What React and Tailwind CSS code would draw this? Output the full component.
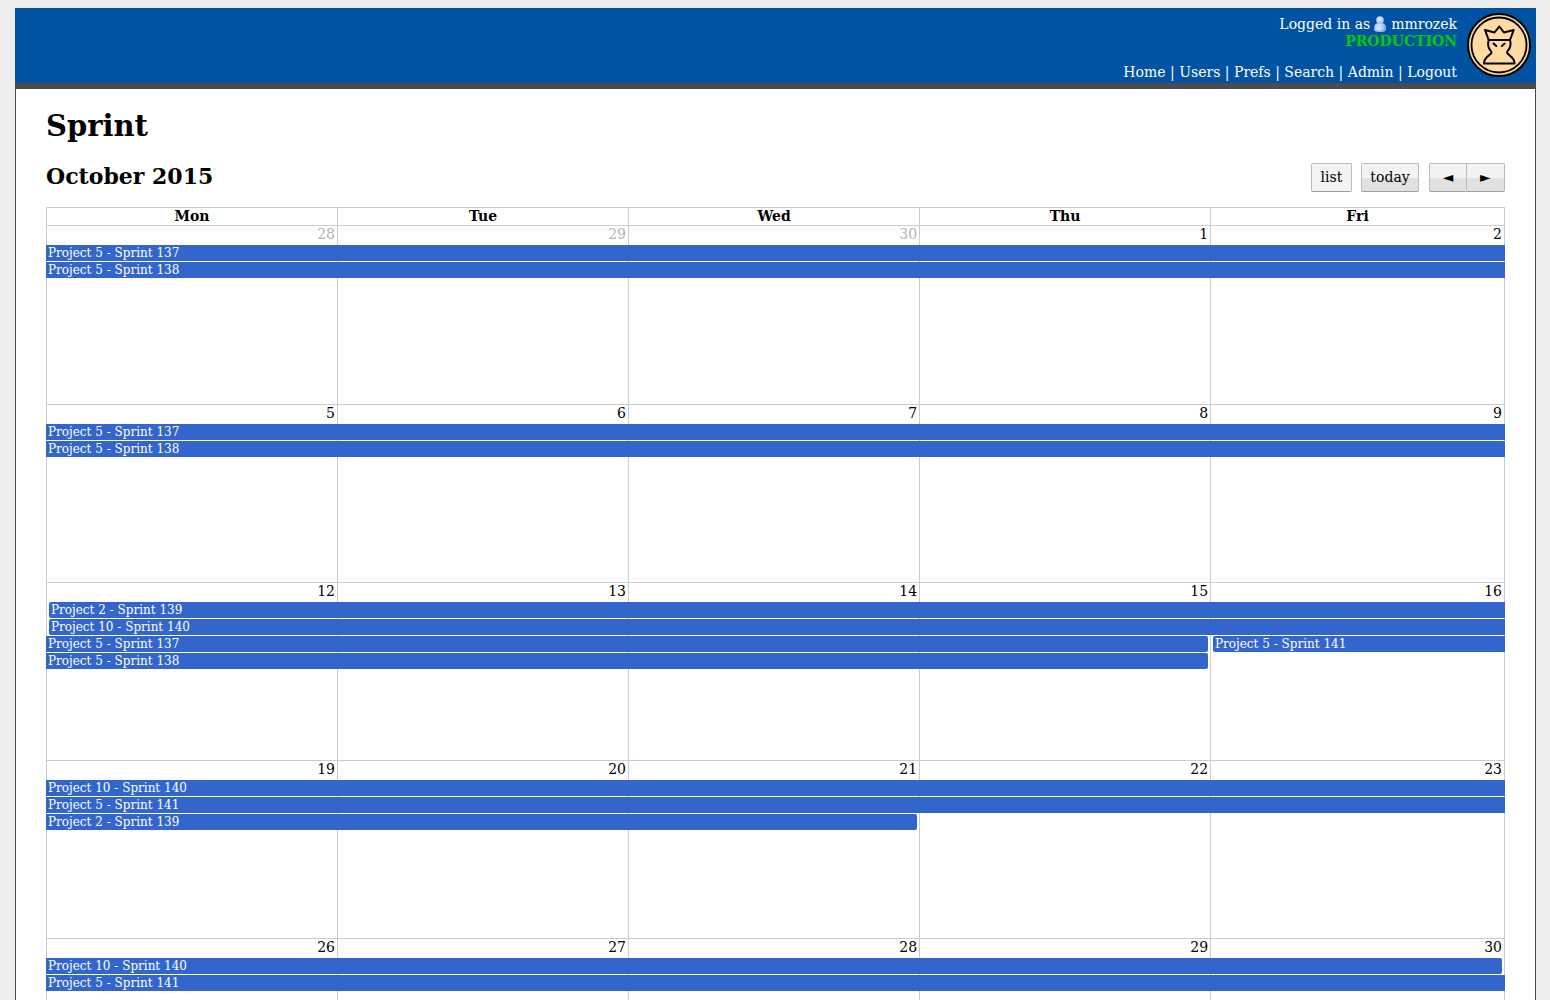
import React from "react";

const DAYS = ["Mon", "Tue", "Wed", "Thu", "Fri"];

const WEEKS = [
  {
    days: [28, 29, 30, 1, 2],
    muted: 3,
    events: [
      { text: "Project 5 - Sprint 137", place: "col-span-5" },
      { text: "Project 5 - Sprint 138", place: "col-span-5" },
    ],
  },
  {
    days: [5, 6, 7, 8, 9],
    events: [
      { text: "Project 5 - Sprint 137", place: "col-span-5" },
      { text: "Project 5 - Sprint 138", place: "col-span-5" },
    ],
  },
  {
    days: [12, 13, 14, 15, 16],
    events: [
      { text: "Project 2 - Sprint 139", place: "col-span-5", start: true },
      { text: "Project 10 - Sprint 140", place: "col-span-5", start: true },
      { text: "Project 5 - Sprint 137", place: "col-span-4 mr-[2px]", end: true },
      { text: "Project 5 - Sprint 141", place: "col-span-1", start: true },
      { text: "Project 5 - Sprint 138", place: "col-span-4 mr-[2px]", end: true },
    ],
  },
  {
    days: [19, 20, 21, 22, 23],
    events: [
      { text: "Project 10 - Sprint 140", place: "col-span-5" },
      { text: "Project 5 - Sprint 141", place: "col-span-5" },
      { text: "Project 2 - Sprint 139", place: "col-span-3 mr-[2px]", end: true },
    ],
  },
  {
    days: [26, 27, 28, 29, 30],
    events: [
      { text: "Project 10 - Sprint 140", place: "col-span-5 mr-[3px]", end: true },
      { text: "Project 5 - Sprint 141", place: "col-span-5" },
    ],
  },
];

const LINKS = ["Home", "Users", "Prefs", "Search", "Admin", "Logout"];

function UserIcon() {
  return (
    <svg viewBox="0 0 12 16" className="mr-[5px] ml-1 inline-block h-4 w-3 align-text-bottom" aria-hidden="true">
      <path d="M0 13C0 9 1.500 7 4 7H8C10.500 7 12 9 12 13 12 15 10 16 6 16S0 15 0 13Z" fill="#a9c2f3" />
      <path d="M10.500 8.500C11.500 9.500 12 11 12 13 12 15 10 16 6.500 16 9.500 14.500 10.500 12 10.500 8.500Z" fill="#86a5e6" />
      <circle cx="6" cy="4" r="3.800" fill="#b3c8f4" />
      <circle cx="5.500" cy="3.300" r="2.300" fill="#d9e5ff" />
      <path d="M2 9.500C3 8.500 4 8 7.500 8V14H1.500Z" fill="#cfddfc" />
    </svg>
  );
}

function Logo() {
  return (
    <svg viewBox="0 0 64 64" className="h-16 w-16" role="img" aria-label="King logo">
      <circle cx="32" cy="32" r="31" fill="#ffdaa3" stroke="#000" strokeWidth="2" />
      <circle cx="32" cy="32" r="27.500" fill="none" stroke="#000" strokeWidth="1.800" />
      <g fill="none" stroke="#000" strokeWidth="2" strokeLinejoin="round" strokeLinecap="round">
        <path d="M21.700 27 18 17 27.500 19.500 32.300 13.500 37 19.500 46.700 17 43 27Z" />
        <path d="M21.700 27C20.500 31 20.500 34.500 24 38.300Q25 39.500 24 40.500L19.500 44.500Q17 47 17 50.500H47.500Q47.500 47 45 44.500L40.500 40.500Q39.500 39.500 40.500 38.300C44 34.500 44.200 31 43 27" />
        <path d="M26.500 30.500 29.300 33M37.700 30.500 34.900 33" />
      </g>
    </svg>
  );
}

function Event({ text, place, start, end }) {
  return (
    <a
      href="#event"
      className={`${place} block h-4 bg-[#3366cc] text-xs leading-4 text-white whitespace-nowrap overflow-hidden pl-[2px] ${
        start ? "ml-[3px] rounded-l-[2px]" : ""
      } ${end ? "rounded-r-[2px]" : ""}`}
    >
      {text}
    </a>
  );
}

const BUTTON =
  "h-[29px] border border-[#bbb] border-b-[#a0a0a0] pb-[2px] text-center text-black";
const SPLIT = "bg-linear-to-b from-[#f3f3f3] from-50% to-[#e1e1e1] to-50%";

export default function App() {
  return (
    <div className="h-screen overflow-hidden bg-[#eee] pt-2 pr-[14px] pl-[15px] font-['DejaVu_Serif',serif] text-sm text-black">
      <header className="flex justify-end border-b-[6px] border-[#4b4b4b] bg-[#0052a3] pr-[5px] text-white">
        <div className="flex h-[75px] flex-col pt-2 pr-[10px] text-right leading-[17px]">
          <div className="h-[17px]">
            Logged in as
            <UserIcon />
            <a href="#profile">mmrozek</a>
          </div>
          <div className="font-bold text-[#00cc00]">PRODUCTION</div>
          <nav className="mt-[14px]">
            {LINKS.map((link, i) => (
              <React.Fragment key={link}>
                {i > 0 && " | "}
                <a href={`#${link.toLowerCase()}`}>{link}</a>
              </React.Fragment>
            ))}
          </nav>
        </div>
        <div className="pt-[5px]">
          <Logo />
        </div>
      </header>

      <main className="border-x border-[#4b4b4b] bg-white px-[30px] pt-[19px] pb-8">
        <h1 className="text-[29px] leading-9 font-bold">Sprint</h1>
        <div className="mt-[19px] flex items-start justify-between">
          <h2 className="text-[22px] leading-[26px] font-bold">October 2015</h2>
          <div className="flex">
            <button className={`${BUTTON} w-[41px] rounded-[2px] bg-[#f3f3f3]`}>list</button>
            <button className={`${BUTTON} ${SPLIT} ml-[9px] w-[58px] rounded-[2px]`}>today</button>
            <button aria-label="Previous" className={`${BUTTON} ${SPLIT} ml-[10px] w-[38px] rounded-l-[2px]`}>◄</button>
            <button aria-label="Next" className={`${BUTTON} ${SPLIT} w-[38px] rounded-r-[2px] border-l-0`}>►</button>
          </div>
        </div>

        <table className="mt-[15px] w-full table-fixed border-separate border-spacing-0 border-r border-b border-[#ccc]">
          <colgroup>
            <col className="w-[19.96%]" />
            <col className="w-[19.96%]" />
            <col className="w-[19.96%]" />
            <col className="w-[19.96%]" />
            <col />
          </colgroup>
          <thead>
            <tr>
              {DAYS.map((day) => (
                <th key={day} className="h-[18px] border-t border-l border-[#ccc] p-0 leading-[17px] font-bold">
                  {day}
                </th>
              ))}
            </tr>
          </thead>
          <tbody>
            {WEEKS.map((week, w) => (
              <tr key={w} className="relative h-[178px] first:h-[179px]">
                {week.days.map((day, d) => (
                  <td key={d} className="border-t border-l border-[#ccc] p-0 align-top">
                    <div className={`pr-[2px] text-right leading-4 ${d < (week.muted || 0) ? "text-[#b3b3b3]" : ""}`}>
                      {day}
                    </div>
                    {d === 0 && (
                      <div className="absolute top-5 -right-px left-0 grid grid-cols-[291fr_291fr_291fr_291fr_295fr] gap-y-px">
                        {week.events.map((event) => (
                          <Event key={event.text} {...event} />
                        ))}
                      </div>
                    )}
                  </td>
                ))}
              </tr>
            ))}
          </tbody>
        </table>
      </main>
    </div>
  );
}
